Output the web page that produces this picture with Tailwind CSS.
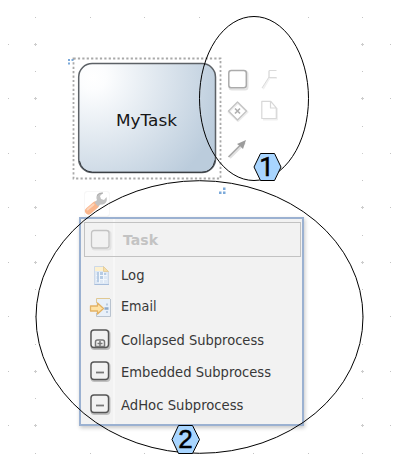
<!DOCTYPE html>
<html lang="en">
<head>
<meta charset="utf-8">
<title>Process editor</title>
<script src="https://cdn.jsdelivr.net/npm/@tailwindcss/browser@4"></script>
</head>
<body class="bg-white overflow-hidden">
<main class="relative w-[405px] h-[471px] overflow-hidden bg-white font-['DejaVu_Sans',sans-serif]">
  <!-- canvas grid -->
  <svg class="absolute inset-0" width="405" height="471" fill="none">
    <g stroke="#c4c4c4" stroke-width="1">
      <path d="M35 17.5h1M90 17.5h1M144 17.5h1M199 17.5h1M308 17.5h1M362 17.5h1M35 453.5h1M90 453.5h1M144 453.5h1M253 453.5h1M308 453.5h1M362 453.5h1"/>
      <path d="M8.500 44v1M8.500 98v1M8.500 153v1M8.500 207v1M8.500 262v1M8.500 316v1M8.500 371v1M8.500 425v1M390.500 44v1M390.500 98v1M390.500 153v1M390.500 207v1M390.500 262v1M390.500 316v1M390.500 371v1M390.500 425v1"/>
      <path d="M35.500 71v1M35.500 126v1M35.500 180v1M35.500 235v1M35.500 289v1M35.500 344v1M35.500 398v1M362.500 71v1M362.500 126v1M362.500 180v1M362.500 235v1M362.500 289v1M362.500 344v1M362.500 398v1"/>
      <path stroke="#cdcdcd" d="M34 44.5h3M34 98.5h3M34 207.500h3M34 262.500h3M34 371.500h3M34 425.500h3M361 44.500h3M361 98.500h3M361 207.500h3M361 262.500h3M361 371.500h3M361 425.500h3M35.500 43v3M35.500 97v3M35.500 206v3M35.500 261v3M35.500 370v3M35.500 424v3M362.500 43v3M362.500 97v3M362.500 206v3M362.500 261v3M362.500 370v3M362.500 424v3M35.500 153v1M362.500 153v1M35.500 316v1M362.500 316v1"/>
    </g>
  </svg>

  <!-- task node with selection frame and resize handles -->
  <svg class="absolute inset-0" width="405" height="471" fill="none">
    <defs>
      <radialGradient id="task" gradientUnits="userSpaceOnUse" cx="93" cy="77" r="132">
        <stop offset="0" stop-color="#fff"/><stop offset=".1" stop-color="#fcfdfe"/><stop offset="1" stop-color="#bbccdc"/>
      </radialGradient>
    </defs>
    <rect x="73.500" y="58.500" width="147" height="120" stroke="#a9a9a9" stroke-width="1.800" stroke-dasharray="2.200 2.200"/>
    <rect x="78.700" y="63.500" width="136.800" height="109" rx="13.500" fill="url(#task)" stroke="#5c6166" stroke-width="1.500"/>
    <path stroke="#33383d" d="M79.500 161q2 10 13 11.300h109q11 0 13.500-12"/>
    <path fill="#7ba9da" d="M68 59h2v2h-2zM71.500 59h2v2h-2zM68 62.500h2v2h-2zM223 187.500h2.500v2.500h-2.500zM219 191.500h2.500v2.500h-2.500zM223 191.500h2.500v2.500h-2.500z"/>
    <text x="116" y="126" textLength="61" lengthAdjust="spacingAndGlyphs" font-size="16" fill="#161616">MyTask</text>
  </svg>

  <!-- shape shortcuts -->
  <svg class="absolute left-[224px] top-[64px]" width="58" height="98" fill="none" stroke-linejoin="round">
    <rect x="5.500" y="7.500" width="18" height="18" rx="2.500" stroke="#e3e3e3" stroke-width="2"/>
    <rect x="4.800" y="6.500" width="17.500" height="17.300" rx="2.500" fill="#fff" stroke="#ababab" stroke-width="1.500"/>
    <path stroke="#f1f1f1" stroke-width="2" d="M39 25l7-12M45 7v7h8"/>
    <path stroke="#dadada" d="M38 24l7-11M52.500 6.500H45v7h7.500"/>
    <path stroke="#ececec" stroke-width="2" d="M14 39l9.500 9L14 57l-9.500-9z"/>
    <path stroke="#c3c3c3" stroke-width="1.300" d="M13.500 38l9 9-9 9-9-9z"/>
    <path stroke="#b0b0b0" stroke-width="1.700" d="M11 44.500l5 5M16 44.500l-5 5"/>
    <path stroke="#efefef" stroke-width="2" d="M39 55.500h14V44"/>
    <path fill="#fff" stroke="#d8d8d8" stroke-width="1.200" d="M37.800 37.300h9l5.500 6.500v10.700H37.800zM46.500 37.500v6.500H52"/>
    <path stroke="#e2e2e2" stroke-width="2" d="M6 94l15-15"/>
    <path stroke="#a8a8a8" stroke-width="1.700" d="M4.500 93l14-14"/>
    <path fill="#9c9c9c" d="M22 76l-3 9-2.500-2.500-3.500-2.500z"/>
  </svg>

  <!-- morph button -->
  <svg class="absolute left-[80px] top-[186px]" width="34" height="32">
    <rect x="4" y="5" width="26" height="26" rx="3" fill="#f7f7f7"/>
    <rect x="5" y="6" width="24" height="24" rx="3" fill="#fff"/>
    <path stroke="#fab68c" stroke-width="7" stroke-linecap="round" d="M8.500 25l7-6"/>
    <path stroke="#fdd5bb" stroke-width="2" stroke-linecap="round" d="M7.500 23.500l6-5"/>
    <path fill="#c2c2c2" d="M14.500 16.500l2.500-2.500c-2-5 2-8 6-7l-3 3 1 3 3 1 2.500-3c1.500 5-2 8-6 7.500l-2.500 2z"/>
    <path stroke="#a8a8a8" d="M17 9.500q2-3 6-2.500" fill="none"/>
  </svg>

  <!-- morph menu -->
  <section class="absolute left-[79px] top-[217px] w-[225px] h-[209px] border-2 border-[#9bb1d1] bg-[#f2f2f2] shadow-[1px_2px_4px_rgba(0,0,0,.22)]">
    <ul class="flex flex-col h-full pt-[3px] bg-[linear-gradient(90deg,transparent_32px,#f7f7f7_32px,#f7f7f7_34px,transparent_34px)]">
      <li class="flex items-center h-[35px] ml-[3px] mr-[1px] pl-[5px] border-[1.500px] border-[#c2c2c2]">
        <svg width="22" height="22" fill="none" class="shrink-0"><rect x="2.500" y="2.500" width="18" height="18" rx="2.500" stroke="#e2e2e2" stroke-width="2"/><rect x="1.500" y="1.500" width="17.500" height="17.500" rx="2.500" fill="#f2f2f2" stroke="#c3c3c3" stroke-width="1.300"/></svg>
        <svg class="ml-[9px]" width="60" height="24"><text x="2" y="17" textLength="35" lengthAdjust="spacingAndGlyphs" font-size="14.500" font-weight="700" fill="#c3c3c3">Task</text></svg>
      </li>
      <li class="flex items-center h-[35px] pl-[8px]">
        <svg width="24" height="24" fill="none" class="shrink-0"><path fill="#dfe9f5" stroke="#cdd9e8" d="M5.500 3.500h9l5 5v13h-14z"/><path fill="#fdf1d0" d="M6 4h8v4H6z"/><path fill="#f8dfa6" stroke="#e5cfa0" d="M14.500 3.500l5 5h-5z"/><path stroke="#f2f7fc" d="M10.500 9v11M14.500 9v11M7 12.500h11M7 16.500h11"/><path fill="#a9c1de" d="M8 9h2v10H8zM11 9h3v3h-3zM15 10h2v2h-2zM11 13h3v3h-3z" opacity=".75"/><path stroke="#a7bddb" d="M5.500 21.500h14.500"/></svg>
        <svg class="ml-[7px]" width="100" height="24"><text x="1" y="17" textLength="23.500" lengthAdjust="spacingAndGlyphs" font-size="14" fill="#383838">Log</text></svg>
      </li>
      <li class="flex items-center h-[30px] pl-[8px]">
        <svg width="24" height="24" fill="none" class="shrink-0"><path fill="#e8f0f9" d="M7 3h14v18H7z"/><path stroke="#e0c892" d="M7.500 8V3.500h13.500"/><path stroke="#b9c3cf" d="M21.500 4v17.500h-14V18"/><path stroke="#8faac9" stroke-width="2.500" d="M15.500 13.500h4"/><path stroke="#b9cbe0" stroke-width="2" d="M17 9.500h2M17 17h2"/><path fill="#ffe2a4" stroke="#e3b264" stroke-width="1.300" stroke-linejoin="round" d="M1.500 11h7V8l6 5.500-6 5.500v-3h-7z"/></svg>
        <svg class="ml-[7px]" width="100" height="24"><text x="1" y="16" textLength="35.500" lengthAdjust="spacingAndGlyphs" font-size="14" fill="#383838">Email</text></svg>
      </li>
      <li class="flex items-center h-[35px] pl-[8px]">
        <svg width="24" height="24" fill="none" class="shrink-0"><rect x="2.500" y="3" width="18" height="18" rx="3" stroke="#bbb" stroke-width="2"/><rect x="2" y="2" width="17.500" height="17.500" rx="3" fill="#f2f2f2" stroke="#555" stroke-width="1.400"/><path stroke="#777" stroke-width="1.500" d="M6.500 19v-5q0-2 2-2h5q2 0 2 2v5M8.500 15.500h5M11 13v5M6.500 18.500h9"/></svg>
        <svg class="ml-[7px]" width="170" height="24"><text x="1" y="17" textLength="143" lengthAdjust="spacingAndGlyphs" font-size="14" fill="#383838">Collapsed Subprocess</text></svg>
      </li>
      <li class="flex items-center h-[30px] pl-[8px]">
        <svg width="24" height="24" fill="none" class="shrink-0"><rect x="2.500" y="3" width="18" height="18" rx="3" stroke="#c0c0c0" stroke-width="2"/><rect x="2" y="2" width="17.500" height="17.500" rx="3" fill="#f2f2f2" stroke="#555" stroke-width="1.400"/><path stroke="#777" stroke-width="1.800" d="M7 12.500h8"/></svg>
        <svg class="ml-[7px]" width="170" height="24"><text x="1" y="17" textLength="150" lengthAdjust="spacingAndGlyphs" font-size="14" fill="#383838">Embedded Subprocess</text></svg>
      </li>
      <li class="flex items-center h-[36px] pl-[8px]">
        <svg width="24" height="24" fill="none" class="shrink-0"><rect x="2.500" y="3" width="18" height="18" rx="3" stroke="#c0c0c0" stroke-width="2"/><rect x="2" y="2" width="17.500" height="17.500" rx="3" fill="#f2f2f2" stroke="#555" stroke-width="1.400"/><path stroke="#777" stroke-width="1.800" d="M7 12.500h8"/></svg>
        <svg class="ml-[7px]" width="170" height="24"><text x="1" y="17" textLength="122.500" lengthAdjust="spacingAndGlyphs" font-size="14" fill="#383838">AdHoc Subprocess</text></svg>
      </li>
    </ul>
  </section>

  <!-- annotations -->
  <svg class="absolute inset-0 z-20" width="405" height="471" fill="none" stroke="#000">
    <ellipse cx="254" cy="98.500" rx="54.500" ry="82"/>
    <ellipse cx="199.500" cy="317" rx="163.500" ry="136.300"/>
    <path fill="#a8d5ff" d="M254 167l6.500-13.500h14l6.500 13.500-6.500 13.500h-14z"/>
    <path fill="#a8d5ff" d="M172 439.500l6.500-14h14l7 14-7 14h-14z"/>
    <g fill="#000" stroke="#000" stroke-width=".5" text-anchor="middle">
      <text x="266.500" y="176" font-size="26" class="font-[Roboto,sans-serif]">1</text>
      <text x="185.500" y="448" font-size="26" class="font-['Liberation_Sans',sans-serif]">2</text>
    </g>
  </svg>
</main>
</body>
</html>
